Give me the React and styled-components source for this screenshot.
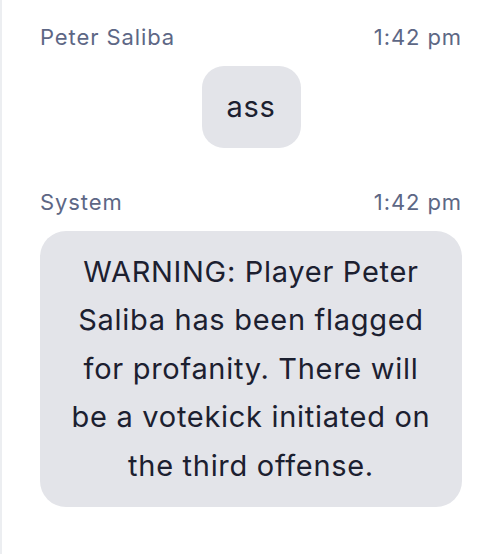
import React from "react";
import styled, { createGlobalStyle } from "styled-components";

const Global = createGlobalStyle`
  html, body { margin: 0; padding: 0; background: #ffffff; }
  body { font-family: Inter, "Noto Sans", sans-serif; }
`;

const Feed = styled.div`
  box-sizing: border-box;
  min-height: 554px;
  border-left: 2px solid #eceef1;
  padding: 24px 28px 0 38px;
  display: flex;
  flex-direction: column;
  gap: 41px;
`;

const Message = styled.div`
  display: flex;
  flex-direction: column;
  align-items: center;
`;

const Meta = styled.div`
  align-self: stretch;
  display: flex;
  justify-content: space-between;
  align-items: center;
  font-size: 22px;
  line-height: 26px;
  letter-spacing: 0.9px;
  color: #5d6785;
  margin-bottom: 16px;
`;

const Bubble = styled.div`
  background: #e3e4e9;
  color: #1c2030;
  font-size: 29px;
  line-height: 48.5px;
  letter-spacing: 0.7px;
  text-align: center;
  border-radius: ${(p) => (p.$wide ? "26px" : "22px")};
  padding: ${(p) => (p.$wide ? "17px 24px 17px" : "17px 25px 16px")};
  ${(p) => (p.$wide ? "align-self: stretch;" : "")}
`;

const messages = [
  { who: "Peter Saliba", time: "1:42 pm", text: "ass" },
  {
    who: "System",
    time: "1:42 pm",
    text: "WARNING: Player Peter Saliba has been flagged for profanity. There will be a votekick initiated on the third offense.",
    wide: true,
  },
];

export default function App() {
  return (
    <>
      <Global />
      <Feed>
        {messages.map((m, i) => (
          <Message key={i}>
            <Meta>
              <span>{m.who}</span>
              <span>{m.time}</span>
            </Meta>
            <Bubble $wide={m.wide}>{m.text}</Bubble>
          </Message>
        ))}
      </Feed>
    </>
  );
}
